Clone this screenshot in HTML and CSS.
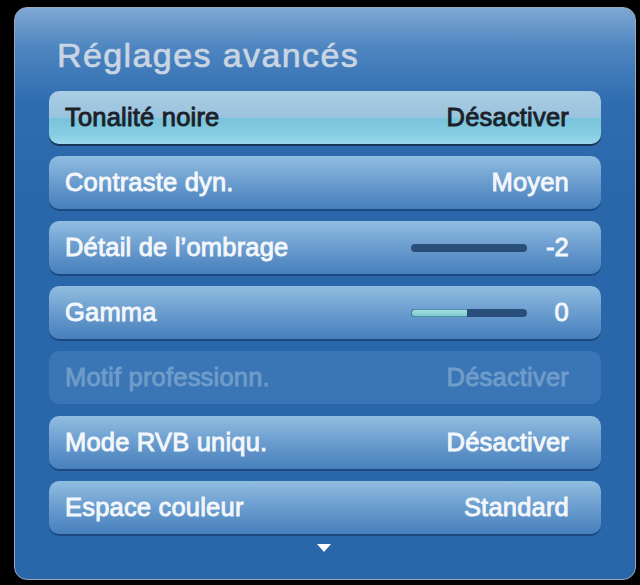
FILE: index.html
```html
<!DOCTYPE html>
<html lang="fr">
<head>
<meta charset="utf-8">
<title>Réglages avancés</title>
<link rel="stylesheet" href="styles.css">
</head>
<body>
<div class="panel">
  <h1 class="title">Réglages avancés</h1>
  <ul class="list">
    <li class="row row-focus"><span class="label">Tonalité noire</span><span class="value">Désactiver</span></li>
    <li class="row"><span class="label">Contraste dyn.</span><span class="value">Moyen</span></li>
    <li class="row"><span class="label">Détail de l’ombrage</span><span class="ctrl"><span class="slider"></span><span class="num">-2</span></span></li>
    <li class="row"><span class="label">Gamma</span><span class="ctrl"><span class="slider"><span class="fill" style="width:48%"></span></span><span class="num">0</span></span></li>
    <li class="row row-disabled"><span class="label">Motif professionn.</span><span class="value">Désactiver</span></li>
    <li class="row"><span class="label">Mode RVB uniqu.</span><span class="value">Désactiver</span></li>
    <li class="row"><span class="label">Espace couleur</span><span class="value">Standard</span></li>
  </ul>
  <div class="more"><span class="arrow"></span></div>
</div>
</body>
</html>
```
FILE: styles.css
```css
html, body {
  margin: 0;
  padding: 0;
  background: #000;
}
body {
  width: 640px;
  height: 585px;
  overflow: hidden;
  font-family: "Liberation Sans", Arial, sans-serif;
}
.panel {
  box-sizing: border-box;
  margin: 7px 0 0 14px;
  width: 622px;
  height: 573px;
  border: 1.5px solid #9aa9ba;
  border-radius: 13px;
  background: linear-gradient(to bottom, #7ea8d4 0px, #4d85c0 40px, #2f6cb0 95px, #2a66aa 200px, #2a66aa 100%);
  padding: 27px 34px 0 34px;
  display: flex;
  flex-direction: column;
}
.title {
  margin: 0 0 0 8px;
  font-size: 34px;
  line-height: 41px;
  font-weight: normal;
  letter-spacing: 1.4px;
  color: #c9d5e2;
  -webkit-text-stroke: 0.7px #c9d5e2;
}
.list {
  list-style: none;
  margin: 15px 0 0 0;
  padding: 0;
  display: flex;
  flex-direction: column;
  gap: 12px;
}
.row {
  box-sizing: border-box;
  height: 53px;
  border-radius: 10px;
  padding: 0 32px 0 16px;
  display: flex;
  align-items: center;
  justify-content: space-between;
  font-size: 25.5px;
  letter-spacing: 0.2px;
  font-weight: normal;
  color: #f3f7fb;
  -webkit-text-stroke: 0.9px currentColor;
  background: linear-gradient(to bottom, #90bde0 0%, #6e9fd0 45%, #4680bc 100%);
  box-shadow: 0 2px 0 #1c4a80;
}
.row-focus {
  color: #1b2129;
  background: linear-gradient(to bottom, #a9cde3 0%, #9ac3dd 50%, #78c4da 51%, #86cde2 80%, #9ad8ea 100%);
  box-shadow: 0 2px 0 #1a3552;
}
.row-disabled {
  color: #6f9cc9;
  background: #3a75b5;
  box-shadow: none;
}
.ctrl {
  display: flex;
  align-items: center;
}
.slider {
  width: 116px;
  height: 8px;
  border-radius: 4px;
  background: #2a4e7a;
  overflow: hidden;
  display: flex;
  -webkit-text-stroke: 0;
}
.fill {
  box-sizing: border-box;
  height: 8px;
  border-radius: 4px 0 0 4px;
  background: linear-gradient(to bottom, #a6e0e0, #7ccaca);
  border: 1px solid #4b8fa8;
  border-right: none;
}
.num {
  width: 42px;
  text-align: right;
}
.more {
  display: flex;
  justify-content: center;
  padding-top: 10px;
  padding-right: 2px;
}
.arrow {
  width: 0;
  height: 0;
  border-left: 7.5px solid transparent;
  border-right: 7.5px solid transparent;
  border-top: 8px solid #ffffff;
}
```
